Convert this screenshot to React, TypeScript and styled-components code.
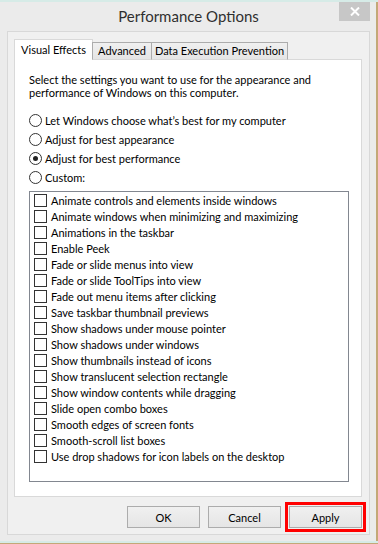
import React from "react";
import styled, { createGlobalStyle } from "styled-components";

const GlobalStyle = createGlobalStyle`
  html, body {
    margin: 0;
    padding: 0;
  }
  body {
    background: linear-gradient(to bottom, #d6ebe7 0 2px, #c3a878 2px);
    font-family: Lato, "Noto Sans", sans-serif;
    font-size: 11px;
    color: #000;
  }
`;

const Window = styled.div`
  margin-top: 2px;
  width: 376px;
  height: 539px;
  box-sizing: border-box;
  background: #ebebeb;
  padding: 0 6px 6px 7px;
  display: flex;
  flex-direction: column;
`;

const TitleBar = styled.div`
  height: 29px;
  display: grid;
  grid-template-columns: 1fr auto 1fr;
  align-items: start;
  margin-left: -7px;
  padding-left: 7px;
`;

const Title = styled.div`
  grid-column: 2;
  font-size: 15px;
  line-height: 28px;
  color: #2f2f2f;
`;

const CloseButton = styled.div`
  grid-column: 3;
  justify-self: end;
  width: 31px;
  height: 19px;
  background: #c7c7c7;
  display: flex;
  align-items: center;
  justify-content: center;
`;

const Client = styled.div`
  flex: 1;
  border: 1px solid #d8d8d8;
  background: #f0f0f0;
  display: flex;
  flex-direction: column;
  padding: 7px 7px 6px 6px;
`;

const TabRow = styled.div`
  display: flex;
  align-items: flex-end;
  margin-bottom: -1px;
  position: relative;
  z-index: 1;
`;

const Tab = styled.div<{ $active?: boolean; $w: number }>`
  box-sizing: border-box;
  width: ${(p) => p.$w}px;
  height: ${(p) => (p.$active ? 21 : 18)}px;
  background: ${(p) => (p.$active ? "#fff" : "linear-gradient(#f0f0f0, #e5e5e5)")};
  border: 1px solid ${(p) => (p.$active ? "#d9d9d9" : "#acacac")};
  border-bottom: ${(p) => (p.$active ? "none" : "1px solid #d9d9d9")};
  ${(p) => (p.$active ? "" : "margin-left: -1px;")}
  display: flex;
  align-items: ${(p) => (p.$active ? "flex-start" : "center")};
  justify-content: center;
  line-height: 16px;
  padding-top: ${(p) => (p.$active ? 2 : 0)}px;
  white-space: nowrap;
`;

const Panel = styled.div`
  height: 438px;
  box-sizing: border-box;
  background: #fff;
  border: 1px solid #d9d9d9;
  padding: 13px 12px 0 14px;
  display: flex;
  flex-direction: column;
`;

const Intro = styled.p`
  margin: 0;
  line-height: 13px;
  white-space: nowrap;
`;

const RadioGroup = styled.div`
  margin-top: 12px;
  margin-bottom: 4px;
  display: flex;
  flex-direction: column;
`;

const RadioRow = styled.label`
  height: 19px;
  display: flex;
  align-items: center;
  gap: 3px;
`;

const RadioCircle = styled.span<{ $checked?: boolean }>`
  box-sizing: border-box;
  width: 13px;
  height: 13px;
  border-radius: 50%;
  border: 1px solid #333;
  background: #fff;
  display: flex;
  align-items: center;
  justify-content: center;
  &::after {
    content: "";
    width: 5px;
    height: 5px;
    border-radius: 50%;
    background: ${(p) => (p.$checked ? "#222" : "transparent")};
  }
`;

const ListBox = styled.div`
  height: 291px;
  box-sizing: border-box;
  border: 1px solid #828790;
  background: #fff;
  padding: 0 0 0 4px;
  display: flex;
  flex-direction: column;
`;

const CheckRow = styled.label`
  height: 16px;
  display: flex;
  align-items: center;
  gap: 4px;
  white-space: nowrap;
`;

const CheckBox = styled.span`
  box-sizing: border-box;
  width: 13px;
  height: 13px;
  border: 1px solid #333;
  background: #fff;
  flex: none;
`;

const ButtonRow = styled.div`
  margin-top: 9px;
  display: flex;
  justify-content: flex-end;
  gap: 8px;
`;

const Button = styled.button<{ $highlight?: boolean }>`
  width: 73px;
  height: 22px;
  box-sizing: border-box;
  border: 1px solid #acacac;
  background: linear-gradient(#f0f0f0, #e5e5e5);
  font-family: inherit;
  font-size: 11px;
  color: #000;
  padding: 0;
  outline: ${(p) => (p.$highlight ? "3px solid #ff0000" : "none")};
  outline-offset: 1px;
`;

const tabs = [
  { label: "Visual Effects", w: 79, active: true },
  { label: "Advanced", w: 60 },
  { label: "Data Execution Prevention", w: 137 },
];

const radios = [
  { label: "Let Windows choose what’s best for my computer" },
  { label: "Adjust for best appearance" },
  { label: "Adjust for best performance", checked: true },
  { label: "Custom:" },
];

const effects = [
  "Animate controls and elements inside windows",
  "Animate windows when minimizing and maximizing",
  "Animations in the taskbar",
  "Enable Peek",
  "Fade or slide menus into view",
  "Fade or slide ToolTips into view",
  "Fade out menu items after clicking",
  "Save taskbar thumbnail previews",
  "Show shadows under mouse pointer",
  "Show shadows under windows",
  "Show thumbnails instead of icons",
  "Show translucent selection rectangle",
  "Show window contents while dragging",
  "Slide open combo boxes",
  "Smooth edges of screen fonts",
  "Smooth-scroll list boxes",
  "Use drop shadows for icon labels on the desktop",
];

export default function App() {
  return (
    <>
      <GlobalStyle />
      <Window>
        <TitleBar>
          <Title>Performance Options</Title>
          <CloseButton>
            <svg width="10" height="9" viewBox="0 0 10 9">
              <path d="M1 0.5 L9 8.5 M9 0.5 L1 8.5" stroke="#fff" strokeWidth="2" />
            </svg>
          </CloseButton>
        </TitleBar>
        <Client>
          <TabRow>
            {tabs.map((t) => (
              <Tab key={t.label} $active={t.active} $w={t.w}>
                {t.label}
              </Tab>
            ))}
          </TabRow>
          <Panel>
            <Intro>
              Select the settings you want to use for the appearance and
              <br />
              performance of Windows on this computer.
            </Intro>
            <RadioGroup>
              {radios.map((r) => (
                <RadioRow key={r.label}>
                  <RadioCircle $checked={r.checked} />
                  {r.label}
                </RadioRow>
              ))}
            </RadioGroup>
            <ListBox>
              {effects.map((e) => (
                <CheckRow key={e}>
                  <CheckBox />
                  {e}
                </CheckRow>
              ))}
            </ListBox>
          </Panel>
          <ButtonRow>
            <Button>OK</Button>
            <Button>Cancel</Button>
            <Button $highlight>Apply</Button>
          </ButtonRow>
        </Client>
      </Window>
    </>
  );
}
